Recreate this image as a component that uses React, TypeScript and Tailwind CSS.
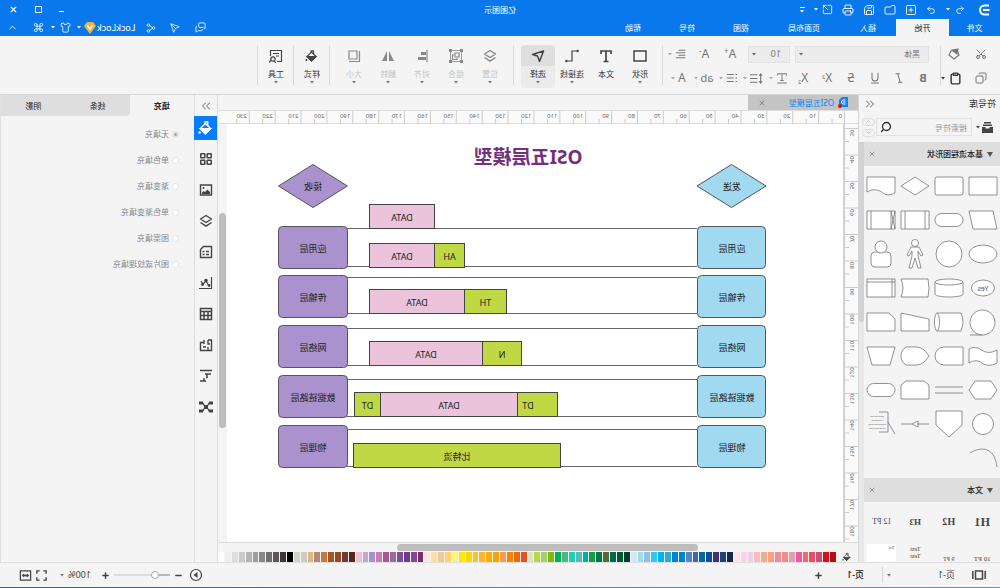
import { useState, type ReactNode } from "react";
import {
  ChevronDown,
  ChevronsRight,
  ChevronsLeft,
  ChevronUp,
  Clipboard,
  Command,
  Copy,
  Folder,
  LayoutGrid,
  MessagesSquare,
  Minus,
  Plus,
  Printer,
  Redo2,
  Save,
  Scissors,
  Search,
  Send,
  Share2,
  Shirt,
  SquareArrowOutUpRight,
  SquarePlus,
  Undo2,
  X,
} from "lucide-react";

const palette = [
  "#b50d16", "#d6101f", "#c94f76", "#e94f63", "#ec6b6f", "#ea5a9c", "#e29ab8", "#f08e86", "#ef8f9c", "#ffa07a",
  "#f0ab93", "#f6bfbc", "#ead3ea", "#ffd3e4", "#ffe0e9", "#14264f", "#243f74", "#43317c", "#0d4f96", "#0068a3",
  "#3f66ae", "#5783c4", "#0080d0", "#0085d0", "#2fa8dc", "#00b4f0", "#35c6f9", "#8ac2ea", "#a3d9ef", "#cfeaf3",
  "#00402f", "#005a2d", "#00665a", "#566b32", "#007a45", "#199a49", "#00b1a0", "#52bcc0", "#1dcfb5", "#4bb985",
  "#00b358", "#80bb0b", "#a4d26a", "#bdd741", "#d0e6cc", "#e94e1d", "#ee6a00", "#f48400", "#f59b55", "#f2a600",
  "#ffab00", "#fcb632", "#f3c536", "#ffd800", "#ffe800", "#fff180", "#ffd36b", "#eacb99", "#ffddae", "#ffe9d3",
  "#7b2b74", "#8a4690", "#6a3b91", "#7a4e9c", "#9a68a0", "#a05a8e", "#cf7cb1", "#a98fd0", "#c7a6cb", "#ecbfda",
  "#58261b", "#733a2d", "#8f4c2b", "#a95425", "#c27a3e", "#b38870", "#dfb785", "#d2cac2", "#cad4ca", "#000000",
  "#3d3538", "#595757", "#727171", "#888888", "#9e9f9f", "#b4b5b5", "#c9caca", "#dcdddd", "#eeeeee", "#ffffff",
];

const menuTabs = [
  { name: "文件", width: "w-[51px]" },
  { name: "开始", width: "w-[53px]" },
  { name: "插入", width: "w-14" },
  { name: "页面布局", width: "w-[72px]" },
  { name: "视图", width: "w-[54px]" },
  { name: "符号", width: "w-[54px]" },
  { name: "帮助", width: "w-[54px]" },
];

const fillTypes = ["无填充", "单色填充", "渐变填充", "单色渐变填充", "图案填充", "图片或纹理填充"];

function Caret({ className = "" }: { className?: string }) {
  return (
    <svg viewBox="0 0 4 3" className={`h-[3px] w-1 shrink-0 ${className}`} fill="currentColor">
      <path d="M0 0h4L2 2.6z" />
    </svg>
  );
}

function Icon({ children, className = "size-[14px]" }: { children: ReactNode; className?: string }) {
  return (
    <svg viewBox="0 0 14 14" className={`shrink-0 ${className}`} fill="none" stroke="currentColor" strokeWidth="1.2">
      {children}
    </svg>
  );
}

function Bucket({ className = "size-[14px]" }: { className?: string }) {
  return (
    <Icon className={className}>
      <path d="M3 7.5 7.5 3l4.5 4.5L7.5 12z" />
      <path d="M3 7.5h9L7.5 12z" fill="currentColor" />
      <path d="M5.5 5V1.8h2.3V4" />
      <circle cx="12.6" cy="11" r="1.1" fill="currentColor" stroke="none" />
    </Icon>
  );
}

function TwoLayers() {
  return (
    <Icon>
      <path d="m7 1.500 5.500 3.500L7 8.500 1.500 5zM1.500 8.500 7 12.200l5.500-3.700" strokeWidth="1.400" strokeLinejoin="round" />
    </Icon>
  );
}

function Divider() {
  return <div className="mt-[10px] h-[39px] w-px shrink-0 bg-[#d8d8d8]" />;
}

function BigButton({ label, children, tone = "text-[#444]", active = false, caret = true }: {
  label: string;
  children: ReactNode;
  tone?: string;
  active?: boolean;
  caret?: boolean;
}) {
  return (
    <button className={`mt-[9px] flex h-[43px] w-[34px] flex-col items-center rounded-sm ${active ? "bg-[#ebebeb]" : ""}`}>
      <span className={`flex h-[21px] w-full items-center justify-center rounded-t-sm ${tone} ${active ? "bg-[#dedede]" : ""}`}>
        {children}
      </span>
      <span className={`mt-[2px] text-[8px] leading-[12px] ${tone === "text-[#888]" ? "text-[#c4c4c4]" : "text-[#333]"}`}>{label}</span>
      {caret && <Caret className="mt-[1px] text-[#777]" />}
    </button>
  );
}

function FormatButton({ label, children, caret = false }: { label: string; children: ReactNode; caret?: boolean }) {
  return (
    <button
      aria-label={label}
      className={`flex h-[18px] items-center justify-center gap-[3px] text-[12px] leading-[18px] text-[#777] ${caret ? "w-[25px]" : "w-6"}`}
    >
      {children}
      {caret && <Caret className="text-[#aaa]" />}
    </button>
  );
}

function TitleBar() {
  return (
    <header className="bg-[#0a78ed] text-white">
      <div className="grid h-[19px] grid-cols-3 items-center">
        <div className="flex items-center gap-[9px] pl-[9px]">
          <svg viewBox="0 0 14 12" className="mr-[3px] h-3 w-[14px]" fill="none" stroke="white" strokeWidth="2">
            <path d="M2 1.5h4.5a4.5 4.5 0 0 1 0 9H2M1.5 6H8" />
          </svg>
          <button aria-label="撤销" className="flex items-center gap-[5px]"><Undo2 size={10} strokeWidth={2} /><Caret /></button>
          <button aria-label="恢复" className="ml-[1px]"><Redo2 size={10} /></button>
          <button aria-label="新建"><SquarePlus size={12} strokeWidth={1.8} /></button>
          <button aria-label="打开"><Folder size={12} strokeWidth={1.8} /></button>
          <button aria-label="保存"><Save size={12} strokeWidth={1.8} /></button>
          <button aria-label="打印"><Printer size={12} strokeWidth={1.8} /></button>
          <button aria-label="导出" className="flex items-center gap-1"><SquareArrowOutUpRight size={11} strokeWidth={1.8} /><Caret /></button>
          <button aria-label="自定义" className="flex flex-col items-center gap-[2px]">
            <span className="h-px w-[5px] bg-white" />
            <Caret />
          </button>
        </div>
        <h1 className="text-center text-[8px] leading-[12px]">亿图图示</h1>
        <div className="flex items-center justify-end gap-[17px] pr-[9px]">
          <button aria-label="最小化" className="mt-1 h-px w-[5px] bg-white" />
          <button aria-label="最大化" className="size-[7px] border border-white" />
          <button aria-label="关闭"><X size={9} strokeWidth={3} /></button>
        </div>
      </div>
      <div className="flex h-[17px] items-stretch text-[8px] leading-[12px]">
        {menuTabs.map((tab) => (
          <button key={tab.name} className={`${tab.width} ${tab.name === "开始" ? "bg-[#f4f4f4] text-[#222]" : ""}`}>
            {tab.name}
          </button>
        ))}
        <div className="ml-auto flex items-center pr-[7px]">
          <button aria-label="消息" className="mr-[15px]"><MessagesSquare size={11} strokeWidth={1.8} /></button>
          <button aria-label="发送" className="mr-[14px]"><Send size={10} strokeWidth={1.8} /></button>
          <button aria-label="分享" className="mr-[10px]"><Share2 size={10} strokeWidth={1.8} /></button>
          <span className="mr-[1px] text-[9px]">LockLock</span>
          <svg viewBox="0 0 12 12" className="mr-[3px] size-3">
            <path d="M3 0h6l3 4-6 8-6-8z" fill="#f3b23e" />
            <path d="M3.500 3.500 6 7l2.500-3.500" stroke="white" strokeWidth="1.600" fill="none" />
          </svg>
          <Caret className="mr-[6px]" />
          <button aria-label="皮肤" className="flex items-center gap-[5px]"><Shirt size={11} strokeWidth={1.8} /><Caret /></button>
          <button aria-label="应用" className="ml-[7px]"><Command size={11} strokeWidth={1.8} /></button>
          <button aria-label="收起" className="ml-[15px]"><ChevronUp size={11} strokeWidth={1.8} /></button>
        </div>
      </div>
    </header>
  );
}

function Ribbon() {
  return (
    <div className="flex h-[59px] shrink-0 border-b border-[#d6d6d6] bg-[#f4f4f4]">
      <div className="flex w-[59px] flex-col gap-[6px] pt-[9px] pl-[13px] text-[#777]">
        <div className="flex h-[18px] items-center gap-[14px]">
          <button aria-label="剪切"><Scissors size={12} className="-rotate-90" /></button>
          <button aria-label="格式刷">
            <Icon>
              <path d="m4 3 6 1 2 4-5 4-5-4z" />
              <path d="m3 2 6 1-5 4z" fill="currentColor" />
            </Icon>
          </button>
        </div>
        <div className="flex h-[18px] items-center gap-[13px]">
          <button aria-label="复制"><Copy size={12} /></button>
          <button aria-label="粘贴" className="flex items-center gap-1 text-[#333]"><Clipboard size={13} strokeWidth={2.6} /><Caret /></button>
        </div>
      </div>
      <Divider />
      <div className="flex w-[277px] flex-col gap-[6px] pt-[9px] pl-[5px]">
        <div className="flex h-[18px] items-center">
          <div className="relative ml-[6px] w-[134px]">
            <select aria-label="字体" className="block h-[17px] w-full appearance-none border border-[#e2e2e2] bg-[#ececec] pl-2 text-[8px] text-[#777]">
              <option>黑体</option>
            </select>
            <Caret className="pointer-events-none absolute top-[7px] right-[4px] text-[#666]" />
          </div>
          <div className="relative ml-[5px] w-[42px]">
            <select aria-label="字号" className="block h-[17px] w-full appearance-none border border-[#e2e2e2] bg-[#ececec] pl-2 text-[9px] text-[#777]">
              <option>10</option>
            </select>
            <Caret className="pointer-events-none absolute top-[7px] right-[4px] text-[#666]" />
          </div>
          <div className="ml-[6px] flex gap-[2px]">
            <FormatButton label="增大字号"><span>A<sup className="text-[8px]">+</sup></span></FormatButton>
            <FormatButton label="减小字号"><span>A<sup className="text-[8px]">-</sup></span></FormatButton>
            <FormatButton label="对齐" caret>
              <Icon className="size-3"><path d="M2 2.500h8M2 5.500h11M2 8.500h8M2 11.500h11" /></Icon>
            </FormatButton>
          </div>
        </div>
        <div className="flex h-[18px] items-center">
          <FormatButton label="加粗"><b className="text-[11px]">B</b></FormatButton>
          <FormatButton label="斜体">
            <Icon className="size-3"><path d="M6 2h5M3 12h5M8.500 2l-3 10" /></Icon>
          </FormatButton>
          <FormatButton label="下划线">
            <Icon className="size-3"><path d="M3.500 1v6a3.500 3.500 0 0 0 7 0V1M2.500 12.800h9" /></Icon>
          </FormatButton>
          <FormatButton label="删除线"><s>S</s></FormatButton>
          <FormatButton label="上标"><span>X<sup className="text-[6px]">2</sup></span></FormatButton>
          <FormatButton label="下标"><span>X<sub className="text-[6px]">2</sub></span></FormatButton>
          <FormatButton label="文字方向" caret>
            <Icon className="size-3"><path d="M2 4V2h10v2M7 2v8M5 10h4M1.500 12.800h11" /></Icon>
          </FormatButton>
          <FormatButton label="行距" caret>
            <Icon className="size-[13px]"><path d="M6 3h8M6 7h8M6 11h8M2.500 2v10M1 4l1.500-2L4 4M1 10l1.500 2L4 10" /></Icon>
          </FormatButton>
          <FormatButton label="项目符号" caret>
            <Icon className="size-3"><path d="M1 3h2M1 7h2M1 11h2M5 3h8M5 7h8M5 11h8" /></Icon>
          </FormatButton>
          <FormatButton label="突出显示" caret><span className="text-[11px]">ab</span></FormatButton>
          <FormatButton label="字体颜色" caret>A</FormatButton>
        </div>
      </div>
      <Divider />
      <div className="flex w-[148px] pl-[5px]">
        <BigButton label="形状"><Icon><path d="M1 2h12v10H1z" strokeWidth="1.500" /></Icon></BigButton>
        <BigButton label="文本" caret={false}><Icon><path d="M2 5V2h10v3M7 2v10.500M4.500 12.500h5" strokeWidth="1.700" /></Icon></BigButton>
        <BigButton label="连接线">
          <Icon><path d="M3 2h4v10h4" /><circle cx="1.500" cy="2" r="1.300" fill="currentColor" stroke="none" /><circle cx="12.500" cy="12" r="1.300" fill="currentColor" stroke="none" /></Icon>
        </BigButton>
        <BigButton label="选择" active><Icon><path d="m1.500 2 11 3.500-5 1.500-2 5.500z" strokeWidth="1.500" strokeLinejoin="round" /></Icon></BigButton>
      </div>
      <Divider />
      <div className="flex w-[183px] pl-[6px]">
        <BigButton label="位置" tone="text-[#888]"><TwoLayers /></BigButton>
        <BigButton label="组合" tone="text-[#888]">
          <Icon>
            <path d="M2 1.500h10M2 12.500h10M1.500 2v10M12.500 2v10" strokeWidth="0.800" />
            <path d="M0 0h3v3H0zM11 0h3v3h-3zM0 11h3v3H0zM11 11h3v3h-3z" fill="currentColor" stroke="none" />
            <path d="M4 4h4v4H4zM9 6h1.500v4.500H6V9" />
          </Icon>
        </BigButton>
        <BigButton label="对齐" tone="text-[#888]">
          <Icon><path d="M2 1v12" /><path d="M3 3h5v3H3zM3 8h8v3H3z" fill="currentColor" stroke="none" /></Icon>
        </BigButton>
        <BigButton label="翻转" tone="text-[#888]"><Icon><path d="M6 2v10H1zM8 2v10h5z" fill="currentColor" stroke="none" /></Icon></BigButton>
        <BigButton label="大小" tone="text-[#888]"><Icon><path d="M4 2h8v8H4zM1.500 2v10.500H12" /></Icon></BigButton>
      </div>
      <Divider />
      <div className="flex w-[35px]"><BigButton label="样式"><Bucket /></BigButton></div>
      <Divider />
      <div className="flex w-[35px]">
        <BigButton label="工具"><Icon><path d="M6 12.500H1.500v-11h11V7M4 4.500h6M4 7h3M9 12.500l-2 1M12 11.500l2 2" /><circle cx="10" cy="10" r="2.200" /></Icon></BigButton>
      </div>
      <Divider />
    </div>
  );
}

const stencils: ReactNode[] = [
  <path d="M-14-9h28V9h-28z" />,
  <rect x="-14" y="-9" width="28" height="18" rx="2" />,
  <path d="M-14 0 0-9 14 0 0 9z" />,
  <path d="M-14-9h28V6C7 2 2 4-2 7s-8 2-12 0z" />,
  <path d="M-10-9h24L10 9h-24z" />,
  <rect x="-14" y="-6.500" width="28" height="13" rx="6.500" />,
  <path d="M-14-9h28V9h-28zM-10-9V9M10-9V9" />,
  <path d="M-14-9h28V9h-28zM-10-9V9M10-9V9M-14-9l4 18M-10-9l-4 18" />,
  <ellipse rx="14" ry="9" />,
  <circle r="13" />,
  <>
    <circle cy="-11" r="3.500" />
    <path d="M-4-7h8l4 8-2 1-3-5v5l3 12H3L0 4l-3 10h-3l3-12v-5l-3 5-2-1z" />
  </>,
  <>
    <rect x="-10" y="-2" width="20" height="15" rx="4" />
    <circle cy="-7" r="6" />
  </>,
  <>
    <ellipse rx="11.500" ry="8" />
    <text y="3" textAnchor="middle" fontSize="7" fill="#555" stroke="none">Yes</text>
  </>,
  <>
    <path d="M-14-6V6c0 4 28 4 28 0V-6" />
    <ellipse cy="-6" rx="14" ry="3" />
  </>,
  <path d="M-13-9h27q-4 9 0 18h-27q-2-9 0-18z" />,
  <path d="M-14-9h28V9h-28zM-11-9V9M-14-6h28" />,
  <path d="M0 13h13M0 13a12.500 12.500 0 1 1 1 0" />,
  <>
    <path d="M12-9h-24q-4 9 0 18h24" />
    <ellipse cx="12" rx="2.500" ry="9" />
  </>,
  <path d="M-14-3 14-9V9h-28z" />,
  <path d="M-14-3l6-6h22V9h-28z" />,
  <path d="M-14-6C-5-1 0-5 3-7s8-2 11 0V7C9 4 5 4 1 7s-9 3-15 0z" />,
  <path d="M-14-9H5a9 9 0 0 1 0 18h-19z" />,
  <path d="M-14 0q6-9 12-9H9q5 3 5 9t-5 9H-2Q-8 9-14 0z" />,
  <path d="M-14-9h28L9 9H-9z" />,
  <path d="M-14 0l6-9H8l6 9-6 9H-8z" />,
  <path d="M-14-3h28M-14 3h28" />,
  <path d="M-14 9V-5l5-4H9l5 4V9z" />,
  <rect x="-14" y="-6.500" width="28" height="13" rx="6.500" />,
  <circle r="10.500" />,
  <path d="M-13-13h26V1L0 13-13 1z" />,
  <path d="M-14 0H-2M3 0h11M-3-3 3 0l-6 3z" />,
  <>
    <path d="M2-12h-9V8h9M-7-2l-7 12" fill="none" />
    <g fontSize="2.200" fill="#555" stroke="none" textAnchor="middle">
      <text x="4" y="-7">Drag the side</text>
      <text x="4" y="-3">handles to</text>
      <text x="4" y="1">change the width</text>
      <text x="4" y="5">of the text block</text>
    </g>
  </>,
  <path d="M-14 9C-12-9 0-13 13-5" />,
];

function SectionHeader({ title }: { title: string }) {
  return (
    <div className="flex h-6 shrink-0 items-center bg-[#dedede] pr-[4px] pl-[7px] text-[8px] leading-[12px] text-[#222]">
      <svg viewBox="0 0 6 5" className="mr-[4px] h-[5px] w-[6px]" fill="#555"><path d="M0 0h6L3 5z" /></svg>
      <h3 className="font-medium">{title}</h3>
      <button aria-label={`关闭${title}`} className="ml-auto text-[#777]"><X size={8} /></button>
    </div>
  );
}

function SymbolPanel() {
  return (
    <aside className="flex w-[142px] shrink-0 flex-col border-r border-[#d6d6d6] bg-[#f4f4f4]">
      <div className="flex h-[17px] shrink-0 items-center justify-between pr-[4px] pl-[4px] text-[9px] leading-[12px] text-[#333]">
        <h2>符号库</h2>
        <button aria-label="折叠" className="text-[#888]"><ChevronsLeft size={14} strokeWidth={1.8} /></button>
      </div>
      <div className="flex h-[30px] shrink-0 items-center pr-[3px] pl-[7px]">
        <button aria-label="选择符号库" className="mr-[4px] flex items-center gap-[2px] text-[#444]">
          <svg viewBox="0 0 11 11" className="w-[11px]" fill="currentColor">
            <path d="M2 0h7v1.500H2zM1 2.500h9V4H1zM0 5h3.500v1.500h4V5H11v6H0z" />
          </svg>
          <Caret />
        </button>
        <div className="relative w-[96px]">
          <input aria-label="搜索符号" placeholder="搜索符号" className="block h-[18px] w-full border border-[#e2e2e2] bg-[#f4f4f4] px-1 text-[8px] placeholder:text-[#999]" />
          <Search size={12} strokeWidth={2.6} className="absolute top-[3px] right-[4px] text-[#333]" />
        </div>
        <div className="ml-auto flex flex-col gap-[3px] text-[#999]">
          <button aria-label="上一个" className="flex h-2 w-[13px] items-center justify-center rounded-sm border border-[#ddd]"><ChevronUp size={7} /></button>
          <button aria-label="下一个" className="flex h-2 w-[13px] items-center justify-center rounded-sm border border-[#ddd]"><ChevronDown size={7} /></button>
        </div>
      </div>
      <div className="flex min-h-0 flex-1">
        <div className="flex min-w-0 flex-1 flex-col overflow-hidden">
          <SectionHeader title="基本流程图形状" />
          <div className="grid grid-cols-4 justify-items-center pt-[3px] pb-[3px]">
            {stencils.map((shape, i) => (
              <svg key={i} viewBox="-15 -17 30 34" className="h-[34px] w-[30px]" fill="white" stroke="#777" strokeWidth="0.8">
                {i === stencils.length - 1 ? <g fill="none">{shape}</g> : shape}
              </svg>
            ))}
          </div>
          <SectionHeader title="文本" />
          <div className="grid grid-cols-4 items-center justify-items-center px-px pt-[3px] font-['Liberation_Serif',serif] text-[8px] leading-[8px] text-[#444]">
            <span className="flex h-[34px] items-center text-[12px] font-bold">H1</span>
            <span className="text-[10px] font-bold">H2</span>
            <span className="text-[9px] font-bold">H3</span>
            <span>12 PT</span>
            <span className="text-[7px]">10 PT</span>
            <span className="text-[6px]">9 PT</span>
            <span className="self-start pt-[7px] text-[6px] leading-[7px]">Text<br />Text</span>
            <span className="mt-[5px] h-[34px] w-[29px] self-start bg-white pt-[2px] pl-[2px] text-[3px] leading-[4px]">Text</span>
          </div>
        </div>
        <div className="w-[5px] bg-[#e9e9e9]"><div className="h-[180px] rounded-b-sm bg-[#d2d2d2]" /></div>
      </div>
    </aside>
  );
}

function HorizontalRuler() {
  const pitch = 25.88;
  return (
    <svg className="h-[13px] w-full" stroke="#ccc" fontSize="6">
      {Array.from({ length: 24 }, (_, i) => (
        <g key={i}>
          <path d={`M${i * pitch + 0.5} 0v13M${(i + 0.5) * pitch} 8v5`} fill="none" />
          <text x={i * pitch + 3} y="7" fill="#666" stroke="none">{i * 10}</text>
        </g>
      ))}
    </svg>
  );
}

function VerticalRuler() {
  const pitch = 26.5;
  return (
    <svg className="h-full w-[13px] shrink-0 bg-[#fafafa]" stroke="#ccc" fontSize="6">
      {Array.from({ length: 16 }, (_, i) => (
        <g key={i} transform={`translate(0 ${i * pitch + 4})`}>
          <path d="M0 .5h13M9 13.500h4" fill="none" />
          <text transform="rotate(-90)" x="-5" y="8" textAnchor="middle" dx={i > 6 ? -1 : 0} fill="#666" stroke="none">{i * 10 + 30}</text>
        </g>
      ))}
    </svg>
  );
}

const layers = [
  { name: "应用层", y: 226.5, lines: [228.5, 266.5] },
  { name: "传输层", y: 275.5, lines: [277.5, 313.5] },
  { name: "网络层", y: 325.5, lines: [328.5, 365.5] },
  { name: "数据链路层", y: 375.5, lines: [379.5, 416.5] },
  { name: "物理层", y: 425.5, lines: [429.5, 466.5] },
];

const pink = "#ebc3db";
const green = "#bfd843";

const packets = [
  { text: "DATA", x: 565.5, y: 204.5, w: 65, fill: pink },
  { text: "AH", x: 535.5, y: 243.5, w: 30, fill: green },
  { text: "DATA", x: 565.5, y: 243.5, w: 65, fill: pink },
  { text: "TH", x: 493.5, y: 289.5, w: 42, fill: green },
  { text: "DATA", x: 535.5, y: 289.5, w: 95, fill: pink },
  { text: "N", x: 478.5, y: 341.5, w: 39, fill: green },
  { text: "DATA", x: 517.5, y: 341.5, w: 113, fill: pink },
  { text: "DT", x: 442.5, y: 392.5, w: 40, fill: green, textX: 472 },
  { text: "DATA", x: 482.5, y: 392.5, w: 137, fill: pink },
  { text: "DT", x: 619.5, y: 392.5, w: 26, fill: green },
  { text: "比特流", x: 439.5, y: 443.5, w: 207, fill: green },
];

function Diagram() {
  return (
    <svg viewBox="157 124 616 417" className="h-[417px] w-[616px]" fontSize="9" textAnchor="middle" fill="#222">
      <text x="472" y="164" fontSize="19" fontWeight="700" fill="#74307c">OSI五层模型</text>
      <g stroke="#555">
        <path d="m234 186 34.500-21.500L303 186l-34.500 21.500z" fill="#a1d9f0" />
        <path d="m652.500 186 34.500-21.500 34.500 21.500-34.500 21.500z" fill="#a992ce" />
      </g>
      <text x="268" y="190">发送</text>
      <text x="687" y="190">接收</text>
      {layers.map((layer) => (
        <g key={layer.name}>
          <path d={`M303 ${layer.lines[0]}H653M303 ${layer.lines[1]}H653`} stroke="#666" />
          <rect x="234.500" y={layer.y} width="68" height="42" rx="4" fill="#a1d9f0" stroke="#555" />
          <rect x="652.500" y={layer.y} width="69" height="42" rx="4" fill="#a992ce" stroke="#555" />
          <text x="268" y={layer.y + 25}>{layer.name}</text>
          <text x="687" y={layer.y + 25}>{layer.name}</text>
        </g>
      ))}
      {packets.map((p, i) => (
        <g key={i}>
          <rect x={p.x} y={p.y} width={p.w} height="24" fill={p.fill} stroke="#444" />
          <text x={p.textX ?? p.x + p.w / 2} y={p.y + 16}>{p.text}</text>
        </g>
      ))}
    </svg>
  );
}

function Workspace() {
  return (
    <main className="flex min-w-0 flex-1 flex-col overflow-hidden bg-[#f4f4f4]">
      <div className="flex h-4 shrink-0 border-b border-[#ddd]">
        <div className="flex w-[110px] items-center bg-[#c4c4c4] pr-[10px] pl-[9px]">
          <svg viewBox="0 0 11 11" className="mr-1 size-[11px]" fill="none">
            <path d="M1 0h6l3 3v7H1z" fill="#0a84ff" />
            <path d="M3.500 3h2a2 2 0 0 1 0 4h-2M3.500 5H6" stroke="white" />
            <circle cx="9" cy="9" r="2" fill="red" />
          </svg>
          <span className="text-[8px] leading-[12px] text-[#0a84ff]">OSI五层模型</span>
          <button aria-label="关闭文档" className="ml-auto text-[#666]"><X size={8} /></button>
        </div>
      </div>
      <div className="flex h-[13px] shrink-0 border-b border-[#ddd] bg-[#fafafa] pr-[9px] pl-[13px]"><HorizontalRuler /></div>
      <div className="flex min-h-0 flex-1">
        <VerticalRuler />
        <div className="min-w-0 flex-1 overflow-hidden border-l-2 border-[#d0d0d0] bg-white"><Diagram /></div>
        <div className="w-[9px] shrink-0 bg-[#f4f4f4] pt-[89px] pl-px"><div className="h-[215px] w-[7px] rounded-full bg-[#bdbdbd]" /></div>
      </div>
      <div className="h-[10px] shrink-0 border-t border-[#ddd] bg-[#f4f4f4] pt-px pl-[160px]"><div className="h-[7px] w-[301px] rounded-full bg-[#bdbdbd]" /></div>
      <div className="flex h-[10px] shrink-0 items-stretch">
        <button aria-label="填充颜色" className="flex w-[22px] items-center justify-center text-[#444]"><Bucket className="size-[10px]" /></button>
        <div className="flex flex-1 gap-px">
          {palette.map((color, i) => (
            <button key={i} aria-label={color} className="flex-1" style={{ backgroundColor: color }} />
          ))}
        </div>
      </div>
    </main>
  );
}

function ToolStrip() {
  const tools = [
    { name: "填充", icon: <Bucket className="size-4" /> },
    { name: "布局", icon: <LayoutGrid size={14} strokeWidth={2.6} /> },
    { name: "图片", icon: <Icon><path d="M1.500 2h11v10h-11z" strokeWidth="1.400" /><path d="M3 11V9l2.500-2.500L8 9l1.500-1L11 9.500V11z" fill="currentColor" stroke="none" /><circle cx="9.500" cy="5" r="1" fill="currentColor" stroke="none" /></Icon> },
    { name: "图层", icon: <TwoLayers /> },
    { name: "页面", icon: <Icon><path d="M1.500 1.500h8l3 3v8h-11zM4 6.500h3M8.500 6.500h2M4 9.500h3M8.500 9.500h2" strokeWidth="1.400" /></Icon> },
    { name: "图表", icon: <Icon><path d="M1.500 1v11.500H14M4 10l3-5 3 3 2-3" /><circle cx="7" cy="4.500" r="1.200" fill="currentColor" /><circle cx="4" cy="9.500" r=".8" fill="currentColor" /><circle cx="10.500" cy="8.500" r=".8" fill="currentColor" /></Icon> },
    { name: "表格", icon: <Icon><path d="M1.500 1.500h11v11h-11zM1.500 4.500h11M1.500 8.500h11M5 4.500v8M9 4.500v8" strokeWidth="1.500" /></Icon> },
    { name: "平面图", icon: <Icon><path d="M5 2H1.500v10.500h11V4.500H9M5 2v4H3M9 2v4M5 9v3M7 9h3" strokeWidth="1.400" /></Icon> },
    { name: "甘特图", icon: <Icon><path d="M1 1.500h12M2 5h6M6 5v4M6 8.500h1M7 12h6M9 9v3" strokeWidth="1.500" /></Icon> },
    { name: "思维导图", icon: <Icon><path d="M2 3h2l2 4-2 4H2M12 3h-2L8 7l2 4h2" /><path d="M5 5h4v4H5zM0 1.500h4v3H0zM10 1.500h4v3h-4zM0 9.500h4v3H0zM10 9.500h4v3h-4z" fill="currentColor" stroke="none" /></Icon> },
  ];
  return (
    <nav className="flex w-6 shrink-0 flex-col items-center border-x border-[#dcdcdc] bg-[#f4f4f4]">
      <button aria-label="折叠" className="flex h-[21px] items-center text-[#888]"><ChevronsRight size={14} strokeWidth={1.8} /></button>
      {tools.map((tool, i) => (
        <button
          key={tool.name}
          aria-label={tool.name}
          className={`mb-[7px] flex h-6 w-[23px] items-center justify-center ${i === 0 ? "bg-[#0a7cff] text-white" : "text-[#444]"}`}
        >
          {tool.icon}
        </button>
      ))}
    </nav>
  );
}

function FillPanel() {
  const [fill, setFill] = useState(0);
  return (
    <aside className="w-[194px] shrink-0 border-r border-[#e0e0e0] bg-[#f4f4f4] text-[8px] leading-[12px]">
      <div className="flex h-[21px] text-[#222]">
        <button className="flex-1 font-bold">填充</button>
        <button className="flex-1 rounded-bl-sm bg-[#dedede]">线条</button>
        <button className="flex-1 bg-[#dedede]">阴影</button>
      </div>
      <div className="flex flex-col gap-[14px] pt-[12px] pl-[15px] text-[#888]">
        {fillTypes.map((type, i) => (
          <label key={type} className="flex items-center gap-[3px]">
            <input
              type="radio"
              name="fill"
              checked={fill === i}
              onChange={() => setFill(i)}
              className="size-[7px] appearance-none rounded-full border border-[#e4e4e4] bg-white checked:border-2 checked:bg-[#aaa]"
            />
            {type}
          </label>
        ))}
      </div>
    </aside>
  );
}

function StatusBar() {
  return (
    <footer className="shrink-0 bg-[#f4f4f4]">
      <div className="flex h-[25px] items-center border-t border-[#dedede] text-[9px] leading-[12px] text-[#444]">
        <button aria-label="页面面板" className="ml-[14px]"><Icon><path d="M3.500 3h7v8h-7zM.8 3v8M13.200 3v8" strokeWidth="1.500" /></Icon></button>
        <button className="ml-[17px] flex w-[68px] items-center justify-between">页-1<Caret className="text-[#777]" /></button>
        <div className="ml-1 h-4 w-px bg-[#d4d4d4]" />
        <button className="ml-[18px] font-medium text-[#111]">页-1</button>
        <button aria-label="添加页面" className="ml-[24px]"><Plus size={9} strokeWidth={4} /></button>
        <div className="ml-auto flex items-center">
          <button aria-label="播放"><Icon><circle cx="7" cy="7" r="5.500" /><path d="m5.500 4 4 3-4 3z" fill="currentColor" stroke="none" /></Icon></button>
          <button aria-label="缩小" className="ml-[6px]"><Minus size={9} strokeWidth={4} /></button>
          <input
            type="range"
            aria-label="缩放"
            defaultValue={22}
            className="mx-1 h-[2px] w-14 appearance-none bg-linear-to-r from-[#b8b8b8] from-25% to-[#dcdcdc] to-25% [&::-webkit-slider-thumb]:size-2 [&::-webkit-slider-thumb]:appearance-none [&::-webkit-slider-thumb]:rounded-full [&::-webkit-slider-thumb]:border [&::-webkit-slider-thumb]:border-[#aaa] [&::-webkit-slider-thumb]:bg-white"
          />
          <button aria-label="放大"><Plus size={9} strokeWidth={4} /></button>
          <button className="ml-[10px] flex items-center gap-1">100%<Caret className="text-[#777]" /></button>
          <button aria-label="全屏" className="ml-[12px]"><Icon className="size-[13px]"><path d="M2 5V2h3M9 2h3v3M12 9v3H9M5 12H2V9" strokeWidth="1.500" /></Icon></button>
          <button aria-label="适应宽度" className="mr-[19px] ml-[3px]"><Icon className="size-[13px]"><path d="M1.500 2h11v10h-11zM4 7h6M5.500 5.500 4 7l1.500 1.500M8.500 5.500 10 7 8.500 8.500" strokeWidth="1.400" /></Icon></button>
        </div>
      </div>
      <div className="h-px bg-linear-to-r from-[#2aace8] to-[#2b5fc0]" />
    </footer>
  );
}

function App() {
  return (
    <div className="flex h-screen -scale-x-100 flex-col overflow-hidden bg-[#f4f4f4] font-['Noto_Sans','Noto_Sans_CJK_SC',sans-serif]">
      <TitleBar />
      <Ribbon />
      <div className="flex min-h-0 flex-1">
        <SymbolPanel />
        <Workspace />
        <ToolStrip />
        <FillPanel />
      </div>
      <StatusBar />
    </div>
  );
}

export default App;
